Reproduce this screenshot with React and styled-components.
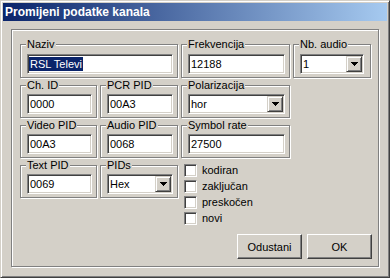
import React from 'react';
import styled, { createGlobalStyle } from 'styled-components';

const GlobalStyle = createGlobalStyle`
  html, body { margin: 0; padding: 0; background: #d4d0c8; }
  body {
    font-family: "Liberation Sans", Arial, sans-serif;
    font-size: 11px;
    color: #000;
  }
  * { box-sizing: border-box; }
`;

const Window = styled.div`
  width: 390px;
  height: 278px;
  background: #d4d0c8;
  border: 1px solid;
  border-color: #d4d0c8 #404040 #404040 #d4d0c8;
  box-shadow: inset 1px 1px 0 #fff, inset -1px -1px 0 #808080;
  padding: 2px;
  display: flex;
  flex-direction: column;
`;

const TitleBar = styled.div`
  flex: none;
  height: 18px;
  background: linear-gradient(to right, #0a246a, #a6caf0);
  color: #fff;
  font-weight: bold;
  font-size: 12px;
  line-height: 18px;
  padding-left: 2px;
  white-space: nowrap;
`;

const Body = styled.div`
  flex: 1;
  display: flex;
  padding: 8px;
`;

const Panel = styled.div`
  flex: 1;
  border: 1px solid #808080;
  box-shadow: inset 1px 1px 0 #fff, 1px 1px 0 #fff;
  padding: 14px 6px 0 8px;
  display: flex;
  flex-direction: column;
`;

const FieldGrid = styled.div`
  display: grid;
  grid-template-columns: 77px 78px 109px 78px;
  column-gap: 3px;
  row-gap: 7px;
  align-items: start;
`;

const GroupBox = styled.div`
  grid-column: ${(p) => p.$area || 'auto'};
  border: 1px solid #808080;
  box-shadow: inset 1px 1px 0 #fff, 1px 1px 0 #fff;
  padding: 0 4px 3px 6px;
  display: flex;
  flex-direction: column;
  align-items: stretch;
`;

const Legend = styled.span`
  align-self: flex-start;
  margin: -7px 0 0 -1px;
  padding: 0 1px;
  height: 13px;
  line-height: 13px;
  background: #d4d0c8;
  white-space: nowrap;
`;

const Field = styled.div`
  margin-top: ${(p) => (p.$tall ? 3 : 2)}px;
  width: ${(p) => (p.$w ? `${p.$w}px` : 'auto')};
  height: 20px;
  background: #fff;
  border: 1px solid;
  border-color: #808080 #fff #fff #808080;
  box-shadow: inset 1px 1px 0 #404040, inset -1px -1px 0 #d4d0c8;
  padding: 0 1px 0 2px;
  display: flex;
  align-items: center;
  justify-content: space-between;
  white-space: nowrap;
  overflow: hidden;
`;

const Selected = styled.span`
  background: #0a246a;
  color: #fff;
  height: 14px;
  line-height: 14px;
  margin-left: -1px;
  padding: 0 1px;
`;

const DropButton = styled.span`
  flex: none;
  width: 16px;
  height: 16px;
  background: #d4d0c8;
  border: 1px solid;
  border-color: #d4d0c8 #404040 #404040 #d4d0c8;
  box-shadow: inset 1px 1px 0 #fff, inset -1px -1px 0 #808080;
  display: flex;
  align-items: center;
  justify-content: center;
`;

const CheckList = styled.div`
  grid-column: 3;
  margin-top: -1px;
  padding-left: 3px;
  display: flex;
  flex-direction: column;
  gap: 3px;
`;

const CheckRow = styled.label`
  display: flex;
  align-items: center;
  gap: 5px;
  height: 13px;
  line-height: 13px;
`;

const CheckBox = styled.span`
  flex: none;
  width: 13px;
  height: 13px;
  background: #fff;
  border: 1px solid;
  border-color: #808080 #fff #fff #808080;
  box-shadow: inset 1px 1px 0 #404040, inset -1px -1px 0 #d4d0c8;
`;

const ButtonRow = styled.div`
  display: flex;
  justify-content: flex-end;
  gap: 5px;
  margin-top: 9px;
`;

const Button = styled.button`
  width: 65px;
  height: 25px;
  font: inherit;
  color: #000;
  background: #d4d0c8;
  border: 1px solid;
  border-color: #fff #404040 #404040 #fff;
  box-shadow: inset -1px -1px 0 #808080;
  padding: 0;
`;

const Arrow = () => (
  <svg width="7" height="4" viewBox="0 0 7 4" shapeRendering="crispEdges">
    <path d="M0 0h7v1H0zM1 1h5v1H1zM2 2h3v1H2zM3 3h1v1H3z" fill="#000" />
  </svg>
);

const Combo = ({ value, w, tall }) => (
  <Field $w={w} $tall={tall}>
    <span>{value}</span>
    <DropButton>
      <Arrow />
    </DropButton>
  </Field>
);

const checks = ['kodiran', 'zaključan', 'preskočen', 'novi'];

export default function App() {
  return (
    <>
      <GlobalStyle />
      <Window>
        <TitleBar>Promijeni podatke kanala</TitleBar>
        <Body>
          <Panel>
            <FieldGrid>
              <GroupBox $area="1 / span 2">
                <Legend>Naziv</Legend>
                <Field $tall>
                  <Selected>RSL Televi</Selected>
                </Field>
              </GroupBox>
              <GroupBox $area="3">
                <Legend>Frekvencija</Legend>
                <Field $tall>12188</Field>
              </GroupBox>
              <GroupBox $area="4">
                <Legend>Nb. audio</Legend>
                <Combo value="1" w={64} tall />
              </GroupBox>

              <GroupBox $area="1">
                <Legend>Ch. ID</Legend>
                <Field>0000</Field>
              </GroupBox>
              <GroupBox $area="2">
                <Legend>PCR PID</Legend>
                <Field>00A3</Field>
              </GroupBox>
              <GroupBox $area="3">
                <Legend>Polarizacija</Legend>
                <Combo value="hor" />
              </GroupBox>

              <GroupBox $area="1">
                <Legend>Video PID</Legend>
                <Field>00A3</Field>
              </GroupBox>
              <GroupBox $area="2">
                <Legend>Audio PID</Legend>
                <Field>0068</Field>
              </GroupBox>
              <GroupBox $area="3">
                <Legend>Symbol rate</Legend>
                <Field>27500</Field>
              </GroupBox>

              <GroupBox $area="1">
                <Legend>Text PID</Legend>
                <Field>0069</Field>
              </GroupBox>
              <GroupBox $area="2">
                <Legend>PIDs</Legend>
                <Combo value="Hex" />
              </GroupBox>
              <CheckList>
                {checks.map((c) => (
                  <CheckRow key={c}>
                    <CheckBox />
                    <span>{c}</span>
                  </CheckRow>
                ))}
              </CheckList>
            </FieldGrid>
            <ButtonRow>
              <Button>Odustani</Button>
              <Button>OK</Button>
            </ButtonRow>
          </Panel>
        </Body>
      </Window>
    </>
  );
}
